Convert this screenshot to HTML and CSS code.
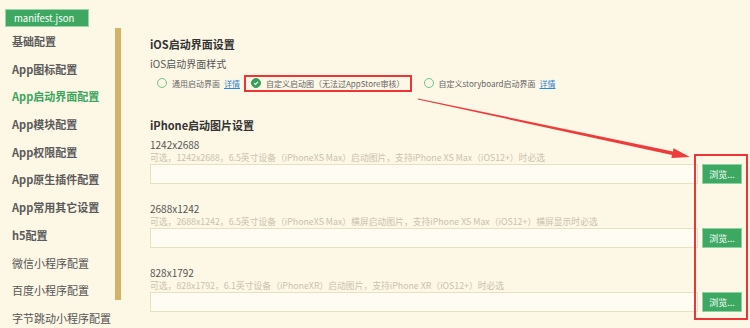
FILE: index.html
```html
<!DOCTYPE html>
<html lang="zh-CN">
<head>
    <meta charset="UTF-8">
    <title>manifest.json</title>
    <link rel="stylesheet" href="styles.css">
</head>
<body>
    <div class="tabs">
        <span class="tab">manifest.json</span>
    </div>

    <div class="layout">
        <ul class="nav">
            <li>基础配置</li>
            <li>App图标配置</li>
            <li class="active">App启动界面配置</li>
            <li>App模块配置</li>
            <li>App权限配置</li>
            <li>App原生插件配置</li>
            <li>App常用其它设置</li>
            <li>h5配置</li>
            <li class="light">微信小程序配置</li>
            <li class="light">百度小程序配置</li>
            <li class="light">字节跳动小程序配置</li>
        </ul>
        <div class="scroll-thumb"></div>

        <div class="main">
            <h2>iOS启动界面设置</h2>
            <p class="sub">iOS启动界面样式</p>
            <div class="radios">
                <label class="radio opt-1"><span class="dot"></span>通用启动界面 <a href="#">详情</a></label>
                <label class="radio opt-2 marked"><span class="dot checked"><svg viewBox="0 0 10 10" width="10" height="10"><path d="M2.6 5.1 L4.3 6.8 L7.5 3.5" fill="none" stroke="#fff" stroke-width="1.4"/></svg></span>自定义启动图（无法过AppStore审核）</label>
                <label class="radio opt-3"><span class="dot"></span>自定义storyboard启动界面 <a href="#">详情</a></label>
            </div>

            <h2 class="section">iPhone启动图片设置</h2>

            <div class="field">
                <div class="label">1242x2688</div>
                <div class="hint">可选，1242x2688，6.5英寸设备（iPhoneXS Max）启动图片，支持iPhone XS Max（iOS12+）时必选</div>
                <div class="row">
                    <div class="input"></div>
                    <button class="browse">浏览...</button>
                </div>
            </div>

            <div class="field">
                <div class="label">2688x1242</div>
                <div class="hint">可选，2688x1242，6.5英寸设备（iPhoneXS Max）横屏启动图片，支持iPhone XS Max（iOS12+）横屏显示时必选</div>
                <div class="row">
                    <div class="input"></div>
                    <button class="browse">浏览...</button>
                </div>
            </div>

            <div class="field">
                <div class="label">828x1792</div>
                <div class="hint">可选，828x1792，6.1英寸设备（iPhoneXR）启动图片，支持iPhone XR（iOS12+）时必选</div>
                <div class="row">
                    <div class="input"></div>
                    <button class="browse">浏览...</button>
                </div>
            </div>
        </div>
    </div>

    <!-- annotation overlays -->
    <div class="callout"></div>
    <svg class="arrow" width="750" height="328" viewBox="0 0 750 328">
        <polygon points="418.1,98.5 673,151.4 673.4,148.3 690,157 671.4,158.1 672,155 417.9,99.5" fill="#f03b3b"/>
    </svg>
</body>
</html>
```

FILE: styles.css
```css
body {
    margin: 0;
    width: 750px;
    height: 328px;
    overflow: hidden;
    position: relative;
    background-color: #fdf7e6;
    font-family: "Noto Sans CJK SC", "Microsoft YaHei", sans-serif;
    color: #555;
}
.tabs {
    padding: 3px 5px 0;
    height: 18px;
}
.tab {
    display: inline-block;
    box-sizing: border-box;
    width: 84px;
    height: 18px;
    line-height: 16px;
    padding-left: 8px;
    background-color: #3ea862;
    border: 1px solid #9ad4ab;
    color: #fff;
    font-size: 9.5px;
}
.layout {
    display: flex;
    margin-top: 7px;
}
.nav {
    list-style: none;
    margin: 0;
    padding: 0 0 0 12px;
    width: 103px;
    flex-shrink: 0;
}
.nav li {
    height: 27.7px;
    line-height: 27.7px;
    font-size: 11px;
    font-weight: bold;
    color: #5b5b5b;
    white-space: nowrap;
}
.nav li.active {
    color: #3aa55c;
}
.nav li.light {
    font-weight: normal;
    color: #555;
}
.scroll-thumb {
    width: 6px;
    height: 272px;
    flex-shrink: 0;
    background-color: #d3b467;
}
.main {
    padding-left: 29px;
    flex: 1;
}
h2 {
    margin: 8px 0 0;
    font-size: 11px;
    line-height: 16px;
    font-weight: bold;
    color: #333;
}
h2.section {
    margin-top: 26px;
}
.sub {
    margin: 5px 0 0;
    font-size: 10px;
    line-height: 14px;
    color: #555;
}
.radios {
    display: flex;
    align-items: center;
    height: 16px;
    margin-top: 4px;
    padding-left: 7px;
    font-size: 8px;
    color: #666;
}
.radio {
    display: flex;
    align-items: center;
    position: relative;
    white-space: nowrap;
}
.radio a {
    color: #2f86d6;
    margin-left: 4px;
}
.opt-2 {
    margin-left: 11px;
}
.opt-3 {
    margin-left: 19px;
}
.marked::after {
    content: "";
    position: absolute;
    left: -7px;
    right: -7px;
    top: -3px;
    bottom: -3px;
    border: 2px solid #ee3535;
}
.dot {
    box-sizing: border-box;
    width: 10px;
    height: 10px;
    border-radius: 50%;
    border: 1px solid #6ec48d;
    margin-right: 5px;
    display: flex;
    align-items: center;
    justify-content: center;
}
.dot.checked {
    background-color: #36a05a;
    border-color: #36a05a;
}
.field {
    margin-top: 5px;
    width: 592px;
}
.field + .field {
    margin-top: 18px;
}
.label {
    font-size: 10px;
    line-height: 14px;
    color: #555;
}
.hint {
    font-size: 8.8px;
    line-height: 12px;
    color: #cbc2ac;
    white-space: nowrap;
}
.row {
    display: flex;
    gap: 4px;
    height: 20px;
}
.input {
    flex: 1;
    box-sizing: border-box;
    background-color: #fffcf3;
    border: 1px solid #ebdfbd;
}
.browse {
    width: 40px;
    height: 20px;
    padding: 0;
    background-color: #3da862;
    border: 1px solid #8fd1a3;
    color: #fff;
    font-family: inherit;
    font-size: 9px;
}
.callout {
    position: absolute;
    left: 694px;
    top: 154px;
    width: 50px;
    height: 162px;
    border: 2px solid #ee3535;
}
.arrow {
    position: absolute;
    left: 0;
    top: 0;
    pointer-events: none;
}
```
